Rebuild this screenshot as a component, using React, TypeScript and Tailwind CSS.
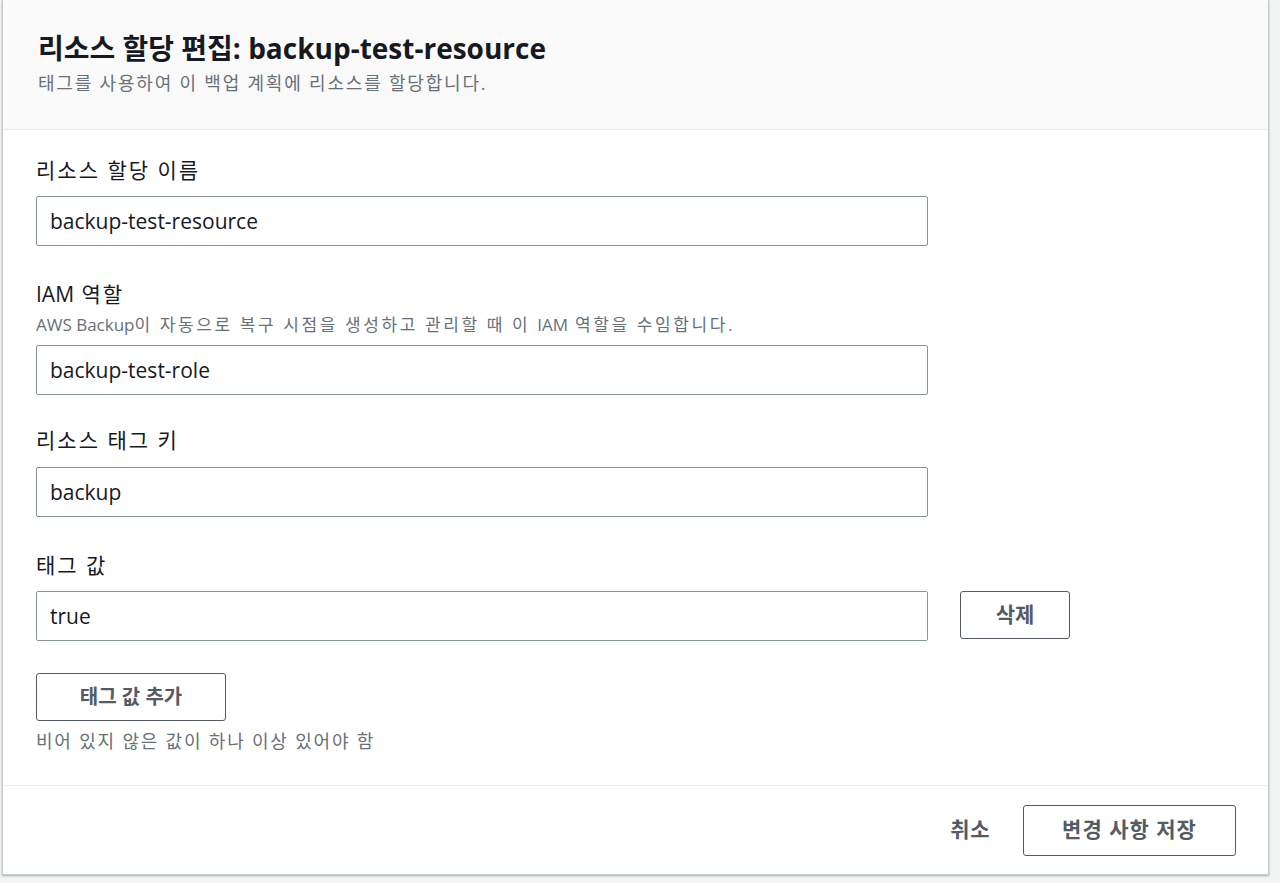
import React, { useState } from 'react';

const font = { fontFamily: '"Open Sans", "Noto Sans CJK KR", sans-serif' };

interface FieldProps {
  label: React.ReactNode;
  description?: React.ReactNode;
  value: string;
  onChange: (v: string) => void;
  inputGap?: string;
}

const TextField: React.FC<FieldProps> = ({ label, description, value, onChange, inputGap = 'mt-[12px]' }) => (
  <div className="flex flex-col">
    <label className="text-[21px] leading-[28px] tracking-[2px] text-[#16191f]">{label}</label>
    {description && (
      <span className="mt-[5px] text-[17px] leading-[24px] tracking-[2.6px] text-[#687078]">{description}</span>
    )}
    <input
      className={`${description ? 'mt-[8px]' : inputGap} h-[50px] w-[892px] rounded-[2px] border border-[#879596] px-[13px] text-[21px] text-[#16191f] outline-none`}
      value={value}
      onChange={(e) => onChange(e.target.value)}
    />
  </div>
);

export default function App() {
  const [form, setForm] = useState({
    name: 'backup-test-resource',
    role: 'backup-test-role',
    tagKey: 'backup',
    tagValue: 'true',
  });

  return (
    <div className="min-h-[883px] w-[1280px] bg-[#f2f3f3]" style={font}>
      <div className="ml-[2px] w-[1267px] border-x border-b border-[#c6cccc] bg-white shadow-[0_1px_2px_rgba(0,28,36,0.3)]">
        {/* header */}
        <div className="h-[130px] border-b border-[#eaeded] bg-[#fafafa] px-[35px] pt-[28px]">
          <h1 className="text-[28px] font-bold leading-[40px] text-[#16191f]">
            리소스 할당 편집: backup-test-resource
          </h1>
          <p className="mt-[3px] text-[18px] leading-[24px] tracking-[1.8px] text-[#687078]">
            태그를 사용하여 이 백업 계획에 리소스를 할당합니다.
          </p>
        </div>

        {/* body */}
        <div className="flex flex-col px-[33px] pt-[26px] pb-[32px]">
          <TextField label="리소스 할당 이름" value={form.name} onChange={(v) => setForm({ ...form, name: v })} />
          <div className="mt-[34px]">
            <TextField
              label={
                <>
                  <span className="tracking-normal">IAM</span> 역할
                </>
              }
              description={
                <>
                  <span className="tracking-normal">AWS Backup</span>이 자동으로 복구 시점을 생성하고 관리할 때 이{' '}
                  <span className="tracking-normal">IAM</span> 역할을 수임합니다.
                </>
              }
              value={form.role}
              onChange={(v) => setForm({ ...form, role: v })}
            />
          </div>
          <div className="mt-[31px]">
            <TextField
              label="리소스 태그 키"
              inputGap="mt-[13px]"
              value={form.tagKey}
              onChange={(v) => setForm({ ...form, tagKey: v })}
            />
          </div>
          <div className="mt-[34px] flex items-end gap-[32px]">
            <TextField label="태그 값" value={form.tagValue} onChange={(v) => setForm({ ...form, tagValue: v })} />
            <button className="mb-[2px] h-[48px] w-[110px] rounded-[3px] border border-[#545b64] text-[21px] font-bold text-[#545b64]">
              삭제
            </button>
          </div>
          <button className="mt-[32px] h-[48px] w-[190px] rounded-[3px] border border-[#545b64] text-[20px] font-bold text-[#545b64]">
            태그 값 추가
          </button>
          <span className="mt-[8px] text-[18px] leading-[24px] tracking-[1.8px] text-[#687078]">
            비어 있지 않은 값이 하나 이상 있어야 함
          </span>
        </div>

        {/* footer */}
        <div className="flex h-[89px] items-center justify-end gap-[33px] border-t border-[#eaeded] pr-[32px]">
          <button className="text-[21px] font-bold tracking-[0.5px] text-[#545b64]">취소</button>
          <button className="h-[51px] w-[213px] rounded-[3px] border border-[#545b64] text-[21px] font-bold tracking-[1px] text-[#545b64]">
            변경 사항 저장
          </button>
        </div>
      </div>
    </div>
  );
}
